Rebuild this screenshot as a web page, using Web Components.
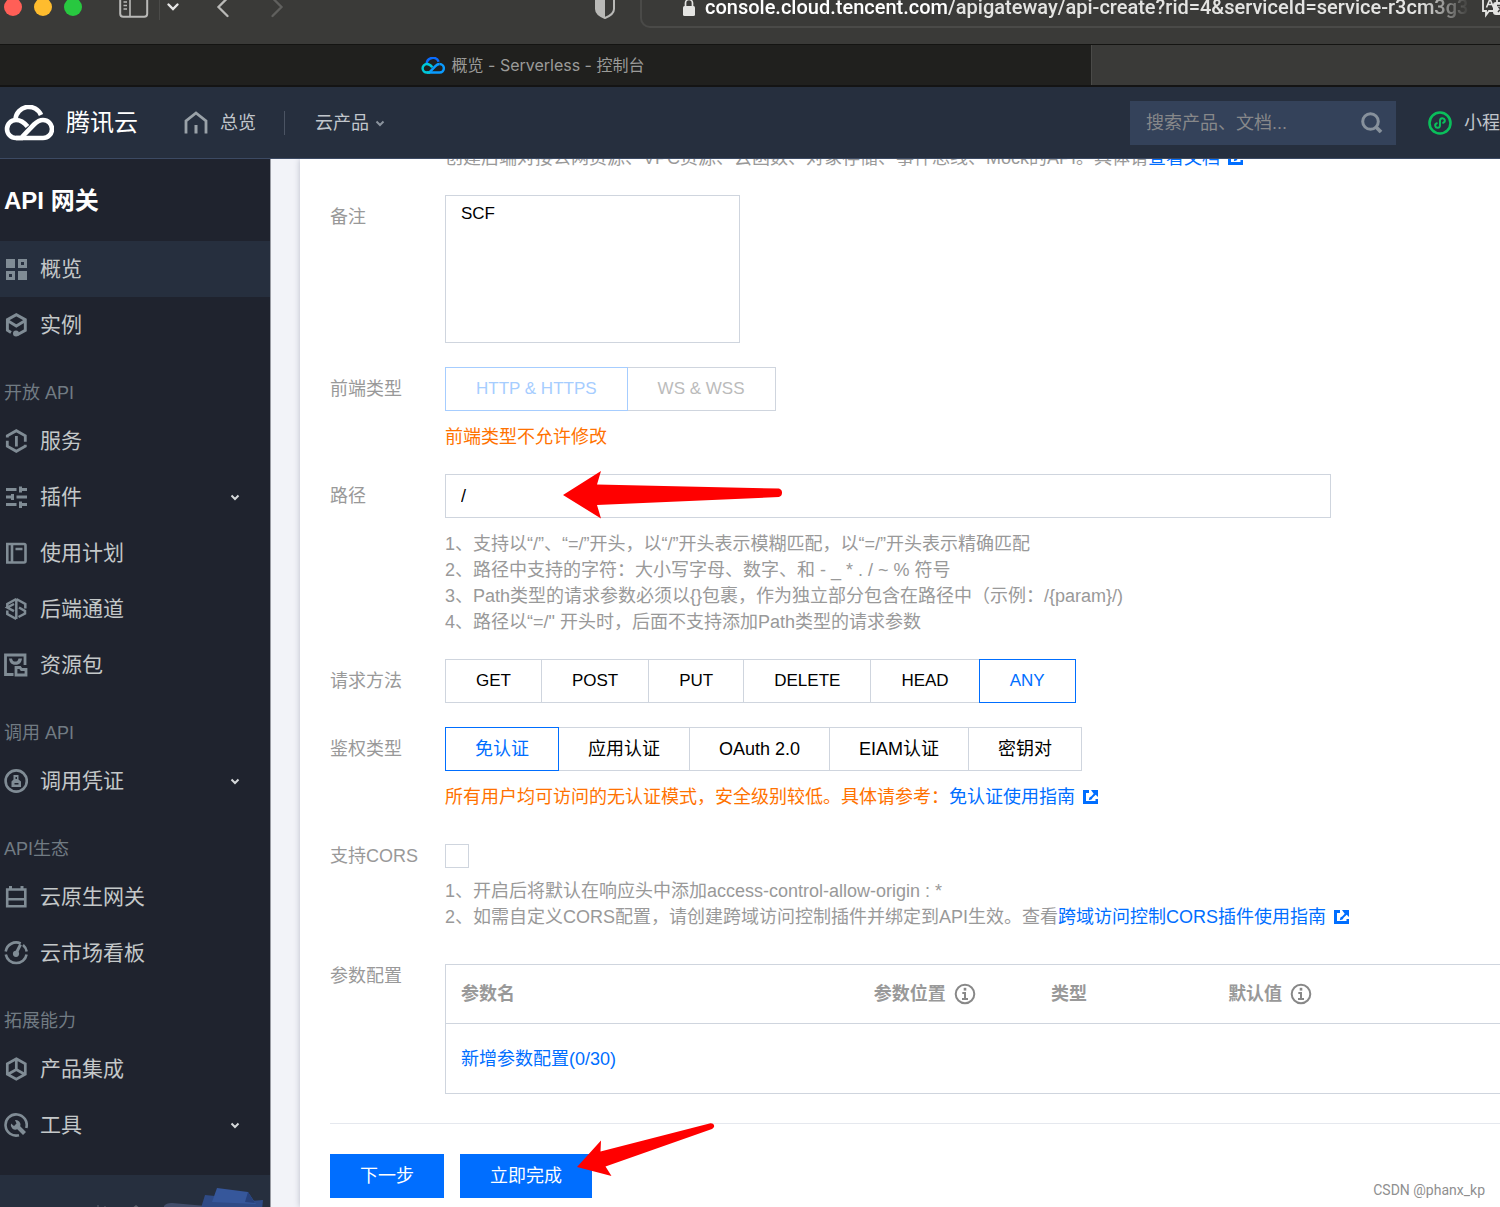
<!DOCTYPE html>
<html lang="zh-CN">
<head>
<meta charset="utf-8">
<title>API 网关 - 控制台</title>
<style>
  html, body { margin: 0; height: 100%; }
  body {
    font-family: "Liberation Sans", "Noto Sans CJK SC", sans-serif;
    font-size: 18px;
    line-height: 26px;
    color: #000;
    overflow: hidden;
  }
</style>
</head>
<body>
<console-app></console-app>

<script>
const cloud = (a, b, c) => `
  <path d="M11.500 14A13.300 13.300 0 0 1 37 10" stroke="${a}"/>
  <path d="M39 15c-4 0-6.500 2-9 4.500L18 32" stroke="${b}"/>
  <path d="M39 15a9 9 0 0 1 0 18H12" stroke="${b}"/>
  <path d="M23.500 21.500C19.500 16.500 16 15 12 15a9 9 0 0 0 0 18h7" stroke="${c}"/>`;

/* Each entry: [viewBox width, viewBox height, markup]. Strokes and fills follow currentColor. */
const ICONS = {
  logo: [50, 36, `<g fill="none" stroke-width="4.600">${cloud('#fff', '#fff', '#fff')}</g>`],
  tab: [50, 36, `<g fill="none" stroke-width="5.200">${cloud('#0a6cff', '#0a9bff', '#00c8d8')}</g>`],
  home: [24, 24, `<path d="M2 22.500V10L12 2l10 8v12.500" fill="none" stroke="currentColor" stroke-width="2.800"/><path d="M12 14v8.500" stroke="currentColor" stroke-width="3"/>`],
  search: [22, 22, `<circle cx="9.500" cy="9.500" r="7.800" fill="none" stroke="currentColor" stroke-width="3"/><path d="M14.500 14.500l5.500 5.500" stroke="currentColor" stroke-width="3.800"/>`],
  chevron: [10, 10, `<path d="M1.500 3.500L5 7l3.500-3.500" fill="none" stroke="currentColor" stroke-width="2"/>`],
  mini: [24, 24, `<circle cx="12" cy="12" r="10.500" fill="none" stroke="#0abf5b" stroke-width="2.600"/><path d="M8.800 12.200a2.400 2.400 0 1 0 3.200 2.300V9.500a2.400 2.400 0 1 1 3.200 2.300" fill="none" stroke="#0abf5b" stroke-width="2" stroke-linecap="round"/>`],
  sidebar: [30, 22, `<rect x="1.200" y="1.200" width="27" height="19.500" rx="3" fill="none" stroke="currentColor" stroke-width="2"/><path d="M11 1v20M4.500 6h3.500M4.500 9.500h3.500M4.500 13h3.500" stroke="currentColor" stroke-width="1.600"/>`],
  down: [14, 10, `<path d="M2.500 2.500L7 7l4.500-4.500" fill="none" stroke="currentColor" stroke-width="2.400" stroke-linecap="round"/>`],
  back: [14, 22, `<path d="M11.500 2L2.500 11l9 9" fill="none" stroke="currentColor" stroke-width="2.300" stroke-linecap="round"/>`],
  forward: [14, 22, `<path d="M2.500 2l9 9-9 9" fill="none" stroke="currentColor" stroke-width="2.300" stroke-linecap="round"/>`],
  shield: [22, 26, `<path d="M11 1.500l9 3V15c0 4-4 7-9 9C6 22 2 19 2 15V4.500z" fill="none" stroke="currentColor" stroke-width="2"/><path d="M11 1.500v22.500C6 22 2 19 2 15V4.500z" fill="currentColor"/>`],
  lock: [14, 20, `<rect x="1" y="9" width="12" height="10" rx="1.500" fill="currentColor"/><path d="M3.500 9.500V6a3.500 3.500 0 0 1 7 0v3.500" fill="none" stroke="currentColor" stroke-width="1.700"/>`],
  translate: [32, 26, `<path d="M3 2h14v15h-8l-3 4v-4H3z" fill="none" stroke="currentColor" stroke-width="1.800"/><path d="M6.500 13.500L10 5l3.500 8.500M8 10.500h4" fill="none" stroke="currentColor" stroke-width="1.600"/><rect x="13" y="8" width="18" height="13" rx="3" fill="currentColor"/><path d="M17 11.500h8M21 10v1.500M18 18l5-6M18.500 13l5 5" stroke="#3a3a38" stroke-width="1.500"/>`],
  external: [16, 16, `<path d="M0 1h6v3H3v8h9.500V10H15v5H0z" fill="currentColor"/><path d="M8 1h7v7l-2.300-2.300-2.900 2.900-1.300 2-2.700.600.600-2.700 2-1.300 2.300-2.500z" fill="currentColor"/>`],
  info: [22, 22, `<circle cx="11" cy="11" r="9.300" fill="none" stroke="currentColor" stroke-width="2"/><path d="M11 4.800v2.800" stroke="currentColor" stroke-width="2.600"/><path d="M8.300 10H11v6M8 16h6" fill="none" stroke="currentColor" stroke-width="2"/>`],
  overview: [24, 24, `<path fill="currentColor" fill-rule="evenodd" d="M2 2h9v9H2zM14 2h9v9h-9zM17 5v3h3V5zM2 14h9v9H2zM5 17v3h3v-3zM14 14h9v9h-9z"/>`],
  instance: [24, 24, `<path d="M7 19.500L3.400 17.300V6.700l8.900-5 9 5v10.600l-8 4.500M3.400 7.500l8.900 5.500 9-5.500" fill="none" stroke="currentColor" stroke-width="2.900"/><circle cx="12" cy="20.500" r="3" fill="currentColor"/>`],
  service: [24, 24, `<path d="M3.300 8.500V6.700l9-5 9 5v6M3.300 11.800v5.500l9 5 9-5V15.800" fill="none" stroke="currentColor" stroke-width="2.800"/><path d="M12.400 7v10.500" stroke="currentColor" stroke-width="2.800"/>`],
  plugin: [24, 24, `<path d="M2 4.500h10.500M15 4.500h8M2 12h6M12.500 12H23M2 19.500h10.500M15 19.500h8" stroke="currentColor" stroke-width="2.800"/><path d="M16.500 1.500v6M8.500 9v6M16.500 16.500v6.500" stroke="currentColor" stroke-width="3"/>`],
  plan: [24, 24, `<path d="M3.300 3h16.700a1.500 1.500 0 0 1 1.500 1.500v15.500a1.500 1.500 0 0 1-1.500 1.500H3.300zM8 3v18.500" fill="none" stroke="currentColor" stroke-width="2.600"/><path d="M11.500 8h7" stroke="currentColor" stroke-width="2.500"/>`],
  channel: [24, 24, `<path d="M12.300 2v20M12.300 2l9 5v4.500M10 7L3.300 10.500l6.700 3.700M12.300 22l-9-5v-3.500M15 10.500l6 3.500v2.500L14.500 20" fill="none" stroke="currentColor" stroke-width="2.500"/><path d="M12.300 2l-9 5v3" fill="none" stroke="currentColor" stroke-width="2.500"/>`],
  pack: [24, 24, `<path d="M9.500 21.500H1.500V2H21v10" fill="none" stroke="currentColor" stroke-width="2.800"/><path d="M5 5.500h3c.5 2.700 1.500 3 3.200 3s2.800-.3 3.300-3h3.500c-.5 3.500-2 6.300-6.500 6.300S5.500 9 5 5.500z" fill="currentColor"/><path d="M12 14.500h4l1.500 2h4.500V22h-10z" fill="none" stroke="currentColor" stroke-width="2.800"/>`],
  credential: [24, 24, `<circle cx="12.200" cy="12" r="10.600" fill="none" stroke="currentColor" stroke-width="2.600"/><path fill="currentColor" fill-rule="evenodd" d="M9.500 6h5v4.500l2.500 2V18H7.500v-5.500l2-2zM11.500 8v2h1.500V8zM10.500 14v1.500h4V14z"/>`],
  gateway: [24, 24, `<path d="M3.200 4.500h18.100v16.700H3.200zM3 14.200h18" fill="none" stroke="currentColor" stroke-width="2.600"/><path d="M6.500 1v4M18 1v4" stroke="currentColor" stroke-width="3"/>`],
  board: [24, 24, `<path d="M1.700 10.500a10.600 10.600 0 0 1 15-8M19 4a10.600 10.600 0 0 1 3.700 6.500M1.800 13.500a10.600 10.600 0 0 0 20.800 0" fill="none" stroke="currentColor" stroke-width="2.600"/><path d="M12 12.500l4.500-9" stroke="currentColor" stroke-width="3"/><circle cx="12" cy="12.800" r="3.100" fill="currentColor"/>`],
  integration: [24, 24, `<path d="M12.300 1.700l9 5v10.600l-9 5-9-5V6.700zM12.300 2v11M3.500 17.500l8.800-5 8.800 5" fill="none" stroke="currentColor" stroke-width="2.700"/>`],
  tools: [24, 24, `<path d="M15 22.200A10.600 10.600 0 1 1 22.300 15" fill="none" stroke="currentColor" stroke-width="2.600"/><path d="M11 7a4.700 4.700 0 0 1 5.200 6.300l5.800 5.700-3 3-5.700-5.700A4.700 4.700 0 0 1 7 10.500l3 2.500 2.500-2.500z" fill="currentColor"/>`],
  arrowPath: [222, 48, `<path d="M0 24L38 0l-4 13.500 182 4a4.500 4.500 0 0 1 0 8.500L34 34l4 13.500z" fill="#f00"/>`],
  arrowDone: [138, 54, `<path d="M0 44L24 17.500l-.500 11L132.500.500c4.500-1 6.500 3.500 2.500 5.500L28.500 43.500 34.500 53z" fill="#f00"/>`],
};

class BaseElement extends HTMLElement {
  connectedCallback() {
    if (this.shadowRoot) return;
    const root = this.attachShadow({ mode: 'open' });
    const tpl = document.createElement('template');
    tpl.innerHTML = `<style>*{box-sizing:border-box}${this.styles()}</style>${this.render()}`;
    root.append(tpl.content.cloneNode(true));
  }
  styles() { return ''; }
  render() { return ''; }
}

customElements.define('ui-icon', class extends BaseElement {
  styles() { return `:host{display:inline-flex;flex:none} svg{display:block}`; }
  render() {
    const [w, h, body] = ICONS[this.getAttribute('name')];
    const width = Number(this.getAttribute('width') || w);
    return `<svg width="${width}" height="${Math.round(width * h / w)}" viewBox="0 0 ${w} ${h}" aria-hidden="true">${body}</svg>`;
  }
});

customElements.define('ext-link', class extends BaseElement {
  styles() { return `:host{display:inline} a{color:#006eff;text-decoration:none} ui-icon{margin-left:8px;vertical-align:-2px}`; }
  render() { return `<a href="#"><slot></slot><ui-icon name="external"></ui-icon></a>`; }
});

customElements.define('browser-chrome', class extends BaseElement {
  styles() { return `
    :host{display:block;flex:none;background:#3a3a38;font-family:Inter,"Noto Sans CJK SC",sans-serif}
    /* the window is scrolled up: only the lower part of the toolbar shows */
    .bar{display:flex;align-items:center;height:75px;margin-top:-31px;color:#b9b9b7;overflow:hidden}
    .lights{display:flex;gap:12px;padding-left:4px}
    .lights i{width:18px;height:18px;border-radius:50%}
    .r{background:#ff5f57}.y{background:#febc2e}.g{background:#28c840}
    .split{display:flex;align-items:center;margin-left:37px}
    .split hr{width:1px;height:26px;margin:0 6px 0 10px;border:0;background:#4b4b49}
    .split ui-icon + hr + ui-icon{color:#e6e6e6}
    .nav{display:flex;gap:40px;margin-left:36px}
    .nav ui-icon:last-child{color:#60605e}
    .shield{margin-left:310px}
    .address{display:flex;align-items:center;flex:1;min-width:0;height:42px;margin-left:24px;padding-left:40px;border:2px solid #4a4a48;border-right:0;border-radius:10px 0 0 10px;color:#e4e4e2}
    .url{flex:1;min-width:0;margin-left:9px;font-family:Roboto,sans-serif;font-size:20px;font-weight:500;line-height:26px;white-space:nowrap;overflow:hidden;
      -webkit-mask-image:linear-gradient(to right,#000 calc(100% - 48px),transparent);mask-image:linear-gradient(to right,#000 calc(100% - 48px),transparent)}
    .url b{font-weight:500;color:#fff}
    .address .tr{margin:0 -12px 0 10px}
    .tabs{display:flex;height:43px;border-top:1px solid #141412;border-bottom:2px solid #141414}
    .tab{display:flex;align-items:center;justify-content:center;gap:7px;width:1092px;max-width:73%;padding-right:26px;background:#20201e;border-right:1px solid #4a4a48;color:#9b9b99;font-size:16px}
  `; }
  render() { return `
    <div class="bar">
      <div class="lights"><i class="r"></i><i class="y"></i><i class="g"></i></div>
      <div class="split"><ui-icon name="sidebar"></ui-icon><hr><ui-icon name="down"></ui-icon></div>
      <div class="nav"><ui-icon name="back"></ui-icon><ui-icon name="forward"></ui-icon></div>
      <ui-icon class="shield" name="shield"></ui-icon>
      <div class="address"><ui-icon name="lock"></ui-icon>
        <div class="url"><b>console.cloud.tencent.com</b>/apigateway/api-create?rid=4&amp;serviceId=service-r3cm3g3</div>
        <ui-icon class="tr" name="translate"></ui-icon></div>
    </div>
    <div class="tabs"><div class="tab"><ui-icon name="tab" width="24"></ui-icon><span>概览 - Serverless - 控制台</span></div></div>`; }
});

customElements.define('console-header', class extends BaseElement {
  styles() { return `
    :host{display:flex;align-items:center;flex:none;height:72px;padding-left:4px;background:#262f3e;border-bottom:1px solid #3c4a63;color:#c1c6cc;white-space:nowrap;overflow:hidden}
    a{display:flex;align-items:center;color:inherit;text-decoration:none}
    .brand{gap:12px;color:#fff;font-size:24px}
    .home{gap:12px;margin-left:46px}
    .home ui-icon{color:#9aa2a8}
    hr{width:1px;height:24px;margin:0 30px 0 28px;border:0;background:#4b5463}
    .prod{gap:6px}
    .prod ui-icon{color:#8a939d}
    .search{display:flex;align-items:center;width:266px;height:44px;margin-left:auto;padding:0 13px 0 16px;background:#34425a;color:#87919c}
    input{flex:1;min-width:0;padding:0;border:0;outline:0;background:none;font:inherit;color:#fff}
    input::placeholder{color:#87888a;opacity:1}
    .mini{gap:12px;width:104px;padding-left:32px}
  `; }
  render() { return `
    <a class="brand" href="#"><ui-icon name="logo"></ui-icon>腾讯云</a>
    <a class="home" href="#"><ui-icon name="home"></ui-icon>总览</a><hr>
    <a class="prod" href="#">云产品<ui-icon name="chevron"></ui-icon></a>
    <label class="search"><input type="search" aria-label="搜索" placeholder="搜索产品、文档..."><ui-icon name="search"></ui-icon></label>
    <a class="mini" href="#"><ui-icon name="mini"></ui-icon><span>小程</span></a>`; }
});

customElements.define('nav-item', class extends BaseElement {
  styles() { return `
    :host{display:block}
    a{display:flex;align-items:center;gap:12px;height:56px;padding:0 30px 0 4px;color:#c4c8c9;font-size:21px;text-decoration:none}
    :host([active]) a{background:#262f3e}
    ui-icon{color:#808c95}
    .more{margin-left:auto;color:#d5d8da}
  `; }
  render() { return `<a href="#"><ui-icon name="${this.getAttribute('icon')}"></ui-icon><slot></slot>${this.hasAttribute('more') ? '<ui-icon class="more" name="chevron"></ui-icon>' : ''}</a>`; }
});

customElements.define('side-nav', class extends BaseElement {
  styles() { return `
    :host{display:flex;flex-direction:column;flex:none;width:271px;background:#1f232e;border-right:1px solid #999ba3;overflow:hidden}
    h1{margin:0;padding:2px 0 0 4px;height:82px;font-size:24px;font-weight:700;line-height:80px;color:#fff}
    h2{margin:0;padding:20px 0 0 4px;height:60px;font-size:18px;font-weight:400;line-height:40px;color:#717b83}
    .promo{flex:none;display:flex;justify-content:flex-end;height:112px;margin-top:22px;background:#262f3e}
  `; }
  render() { return `
    <h1>API 网关</h1>
    <nav>
      <nav-item icon="overview" active>概览</nav-item>
      <nav-item icon="instance">实例</nav-item>
      <h2>开放 API</h2>
      <nav-item icon="service">服务</nav-item>
      <nav-item icon="plugin" more>插件</nav-item>
      <nav-item icon="plan">使用计划</nav-item>
      <nav-item icon="channel">后端通道</nav-item>
      <nav-item icon="pack">资源包</nav-item>
      <h2>调用 API</h2>
      <nav-item icon="credential" more>调用凭证</nav-item>
      <h2>API生态</h2>
      <nav-item icon="gateway">云原生网关</nav-item>
      <nav-item icon="board">云市场看板</nav-item>
      <h2>拓展能力</h2>
      <nav-item icon="integration">产品集成</nav-item>
      <nav-item icon="tools" more>工具</nav-item>
    </nav>
    <div class="promo"><svg width="270" height="112" viewBox="0 0 270 112" aria-hidden="true">
      <path d="M131 34l5-4 5 4z" fill="#5b626d"/><path d="M98 30v4M105 31v3" stroke="#5b626d"/>
      <path d="M164 31q2-3 8-3l34 3v10h-42z" fill="#434e6b"/>
      <path d="M205 20l10 1 35 5 13-1-2 20h-60v-12z" fill="#2f4b86"/>
      <path d="M217 13l31 4 8 12-44-2z" fill="#36579b"/><path d="M248 17l7 11-10-1z" fill="#27417b"/>
    </svg></div>`; }
});

/* Form rows: a label column and a control column, with hints under the control. */
class FormField extends BaseElement {
  styles() { return `
    :host{display:grid;grid-template-columns:115px minmax(0,1fr);color:#999}
    .label{line-height:44px;white-space:nowrap}
    .hint{display:none}
    :host([hint]) .hint{display:block;margin-top:13px}
    :host([warn]) .hint{color:#ff7200}
    ${this.controlStyles()}
  `; }
  controlStyles() { return ''; }
  labelTag() { return `<label class="label" for="control">${this.getAttribute('label')}</label>`; }
  render() { return `${this.labelTag()}<div class="body">${this.control()}<div class="hint"><slot></slot></div></div>`; }
}

customElements.define('note-field', class extends FormField {
  controlStyles() { return `textarea{display:block;width:295px;height:148px;padding:5px 15px;border:1px solid #cfd5de;outline:0;resize:none;font:inherit;font-size:17px;color:#000}`; }
  control() { return `<textarea id="control">${this.getAttribute('value')}</textarea>`; }
});

customElements.define('path-field', class extends FormField {
  controlStyles() { return `
    .wrap{position:relative;width:886px}
    input{display:block;width:100%;height:44px;padding:0 15px;border:1px solid #cfd5de;outline:0;font:inherit;color:#000}
    .mark{position:absolute;left:118px;top:-3px;pointer-events:none}`; }
  control() { return `<div class="wrap"><input id="control" type="text" value="${this.getAttribute('value')}"><ui-icon class="mark" name="arrowPath"></ui-icon></div>`; }
});

customElements.define('segment-field', class extends FormField {
  controlStyles() { return `
    .group{display:flex}
    button{height:44px;padding:0 29px;margin:0 0 0 -1px;border:1px solid #cfd5de;background:#fff;font:inherit;color:#000;white-space:nowrap}
    :host([latin]) button{padding:0 30px;font-size:17px}
    button:first-child{margin-left:0}
    button[aria-pressed=true]{z-index:1;border-color:#006eff;color:#006eff}
    button:disabled{color:#bbb}
    button:disabled[aria-pressed=true]{border-color:#a6cdff;color:#a6cdff}`; }
  labelTag() { return `<span class="label" id="label">${this.getAttribute('label')}</span>`; }
  control() {
    const on = this.getAttribute('value'), off = this.hasAttribute('disabled') ? 'disabled' : '';
    return `<div class="group" role="group" aria-labelledby="label">${this.getAttribute('options').split('|')
      .map(o => `<button type="button" ${off} aria-pressed="${o === on}">${o.replace('&', '&amp;')}</button>`).join('')}</div>`;
  }
});

customElements.define('check-field', class extends FormField {
  controlStyles() { return `
    .box{display:flex;align-items:center;height:44px}
    input{appearance:none;width:24px;height:24px;margin:0;border:1px solid #cfd5de;background:#fff}
    :host([hint]) .hint{margin-top:0}`; }
  control() { return `<div class="box"><input id="control" type="checkbox"></div>`; }
});

customElements.define('params-field', class extends FormField {
  controlStyles() { return `
    table{width:1182px;margin-top:10px;border:1px solid #cfd5de;border-collapse:collapse;table-layout:fixed}
    th{height:59px;padding:0 15px;border-bottom:1px solid #cfd5de;text-align:left;font-weight:700;color:#999}
    th:first-child{width:35%} th:nth-child(2),th:nth-child(3),th:nth-child(4){width:15%}
    th span{display:flex;align-items:center;gap:8px}
    th ui-icon{color:#888}
    td{height:70px;padding:0 15px}
    a{color:#006eff;text-decoration:none}`; }
  labelTag() { return `<span class="label" id="label">${this.getAttribute('label')}</span>`; }
  control() { return `<table aria-labelledby="label">
    <thead><tr><th>参数名</th><th><span>参数位置<ui-icon name="info"></ui-icon></span></th><th>类型</th><th><span>默认值<ui-icon name="info"></ui-icon></span></th><th></th></tr></thead>
    <tbody><tr><td colspan="5"><a href="#">新增参数配置(0/30)</a></td></tr></tbody></table>`; }
});

customElements.define('form-actions', class extends BaseElement {
  styles() { return `
    :host{display:flex;gap:16px;margin-top:5px;padding-top:30px;border-top:1px solid #e5e8ee}
    button{height:44px;padding:0 30px;border:0;background:#006eff;color:#fff;font:inherit}
    .wrap{position:relative}
    .mark{position:absolute;left:117px;top:-31px;pointer-events:none}
  `; }
  render() { return `<button type="button">下一步</button><div class="wrap"><button type="button">立即完成</button><ui-icon class="mark" name="arrowDone"></ui-icon></div>`; }
});

customElements.define('api-form', class extends BaseElement {
  styles() { return `
    :host{display:block;flex:1;min-width:0;padding-left:29px;background:#f2f3f8;overflow:hidden}
    form{display:flex;flex-direction:column;gap:24px;min-width:1330px;min-height:100%;padding:0 30px;background:#fff;box-shadow:0 0 6px #b9bcc8}
    /* the form is scrolled: its first hint is half under the header */
    .intro{margin:-14px 0 0 115px;color:#999}
  `; }
  render() { return `<form>
    <div class="intro">创建后端对接公网资源、VPC资源、云函数、对象存储、事件总线、Mock的API。具体请<ext-link>查看文档</ext-link></div>
    <note-field label="备注" value="SCF"></note-field>
    <segment-field label="前端类型" options="HTTP & HTTPS|WS & WSS" value="HTTP & HTTPS" latin disabled hint warn>前端类型不允许修改</segment-field>
    <path-field label="路径" value="/" hint>
      <div>1、支持以“/”、“=/”开头，以“/”开头表示模糊匹配，以“=/”开头表示精确匹配</div>
      <div>2、路径中支持的字符：大小写字母、数字、和 - _ * . / ~ % 符号</div>
      <div>3、Path类型的请求参数必须以{}包裹，作为独立部分包含在路径中（示例：/{param}/)</div>
      <div>4、路径以“=/" 开头时，后面不支持添加Path类型的请求参数</div>
    </path-field>
    <segment-field label="请求方法" options="GET|POST|PUT|DELETE|HEAD|ANY" value="ANY" latin></segment-field>
    <segment-field label="鉴权类型" options="免认证|应用认证|OAuth 2.0|EIAM认证|密钥对" value="免认证" hint warn>所有用户均可访问的无认证模式，安全级别较低。具体请参考：<ext-link>免认证使用指南</ext-link></segment-field>
    <check-field label="支持CORS" hint>
      <div>1、开启后将默认在响应头中添加access-control-allow-origin : *</div>
      <div>2、如需自定义CORS配置，请创建跨域访问控制插件并绑定到API生效。查看<ext-link>跨域访问控制CORS插件使用指南</ext-link></div>
    </check-field>
    <params-field label="参数配置"></params-field>
    <form-actions></form-actions>
  </form>`; }
});

customElements.define('console-app', class extends BaseElement {
  styles() { return `
    :host{position:relative;display:flex;flex-direction:column;height:100vh;overflow:hidden}
    main{display:flex;flex:1;min-height:0}
    .credit{position:absolute;right:15px;bottom:4px;font-family:Roboto,sans-serif;font-size:14px;color:#8f8f8f}
  `; }
  render() { return `<browser-chrome></browser-chrome><console-header></console-header>
    <main><side-nav></side-nav><api-form></api-form></main><div class="credit">CSDN @phanx_kp</div>`; }
});
</script>
</body>
</html>
